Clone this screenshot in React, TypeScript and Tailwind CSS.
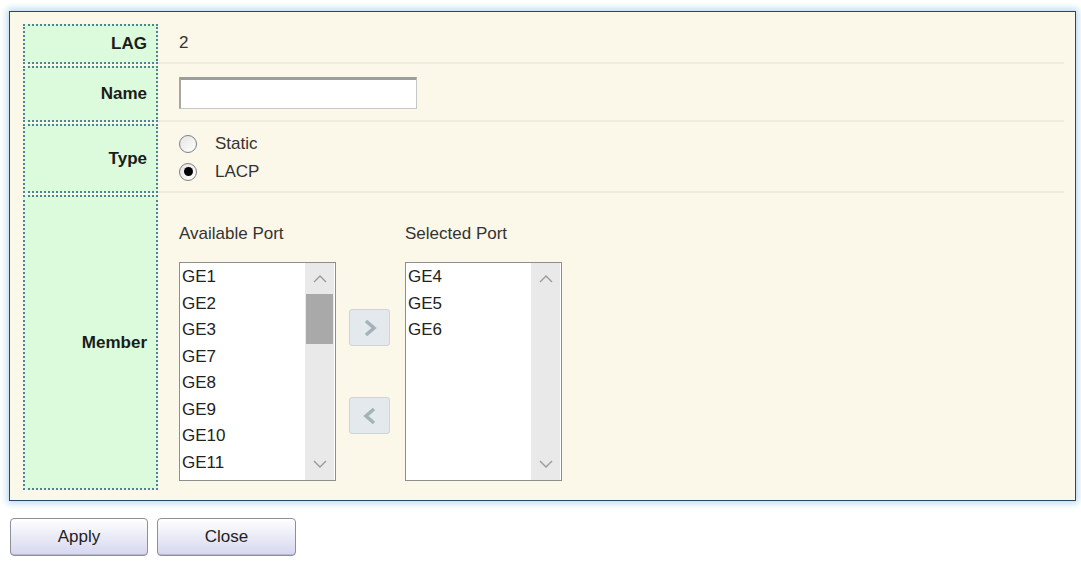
const availablePorts = ['GE1', 'GE2', 'GE3', 'GE7', 'GE8', 'GE9', 'GE10', 'GE11'];
const selectedPorts = ['GE4', 'GE5', 'GE6'];

const Label = ({ text }: { text: string }) => (
  <div className="flex items-center justify-end pr-[9px] bg-[#dcfbdc] border-2 border-dotted border-[#4f8396] text-[17px] font-bold text-[#1b1b1b]">
    {text}
  </div>
);

const Chevron = ({ up }: { up: boolean }) => (
  <svg width="14" height="9" viewBox="0 0 14 9" className="block">
    <path
      d={up ? 'M1 8 L7 2 L13 8' : 'M1 1 L7 7 L13 1'}
      fill="none"
      stroke="#9a9a9a"
      strokeWidth="1.4"
    />
  </svg>
);

const ListBox = ({ items, thumb }: { items: string[]; thumb: boolean }) => (
  <div className="flex w-[157px] h-[219px] border border-[#8e8e8e] bg-white">
    <div className="flex-1 pt-[1px] pl-[2px] text-[17px] leading-[26.5px] text-[#222]">
      {items.map((p) => (
        <div key={p}>{p}</div>
      ))}
    </div>
    <div className="flex flex-col w-[29px] bg-[#e9e9e9] mr-[1px]">
      <div className="h-[31px] flex items-center justify-center">
        <Chevron up />
      </div>
      <div className="flex-1">
        {thumb && <div className="h-[50px] mx-[1px] bg-[#a9a9a9]" />}
      </div>
      <div className="h-[31px] flex items-center justify-center">
        <Chevron up={false} />
      </div>
    </div>
  </div>
);

const MoveButton = ({ dir }: { dir: 'right' | 'left' }) => (
  <div className="w-[41px] h-[37px] flex items-center justify-center rounded-[3px] border border-[#cdd3d6] bg-[#e3e9ec]">
    <svg width="14" height="18" viewBox="0 0 14 18">
      <path
        d={dir === 'right' ? 'M3 2 L11 9 L3 16' : 'M11 2 L3 9 L11 16'}
        fill="none"
        stroke="#a3b3b8"
        strokeWidth="3.5"
      />
    </svg>
  </div>
);

const Radio = ({ checked }: { checked: boolean }) => (
  <div className="w-[18px] h-[18px] rounded-full border border-[#7f7f7f] bg-gradient-to-br from-[#e4e4e4] to-white flex items-center justify-center">
    {checked && <div className="w-[9px] h-[9px] rounded-full bg-black" />}
  </div>
);

export default function App() {
  return (
    <div className="w-[1081px] h-[565px] bg-white overflow-hidden font-['Liberation_Sans',Arial,sans-serif]">
      <div className="ml-[9px] mt-[11px] w-[1067px] h-[490px] border border-[#26496a] shadow-[0_0_7px_2px_#b6d6ef] bg-[#fbf7e9] pt-[12px] pl-[13px] pr-[11px] pb-[10px]">
        <div className="grid grid-cols-[135px_1fr] grid-rows-[40px_56px_69px_1fr] gap-y-[2px] h-full">
          <Label text="LAG" />
          <div className="flex items-center pl-[21px] text-[17px] text-[#333] border-b-2 border-[#efebdf]">
            2
          </div>

          <Label text="Name" />
          <div className="flex items-center pl-[21px] border-b-2 border-[#efebdf]">
            <div className="w-[238px] h-[32px] bg-white border border-[#c6c6c6] border-t-[3px] border-t-[#9d9d9d] border-l-2 border-l-[#a7a7a7]" />
          </div>

          <Label text="Type" />
          <div className="flex flex-col justify-center pl-[21px] text-[17px] text-[#333] border-b-2 border-[#efebdf]">
            <div className="flex items-center gap-[18px] h-[28px]">
              <Radio checked={false} />
              <span>Static</span>
            </div>
            <div className="flex items-center gap-[18px] h-[28px]">
              <Radio checked />
              <span>LACP</span>
            </div>
          </div>

          <Label text="Member" />
          <div className="flex items-end pl-[21px] pb-[9px] text-[17px] text-[#333]">
            <div className="flex flex-col">
              <div className="mb-[16px]">Available Port</div>
              <ListBox items={availablePorts} thumb />
            </div>
            <div className="flex flex-col gap-[51px] mx-[13px] mb-[47px]">
              <MoveButton dir="right" />
              <MoveButton dir="left" />
            </div>
            <div className="flex flex-col ml-[2px]">
              <div className="mb-[16px]">Selected Port</div>
              <ListBox items={selectedPorts} thumb={false} />
            </div>
          </div>
        </div>
      </div>

      <div className="flex gap-[9px] ml-[10px] mt-[17px]">
        <button className="w-[138px] h-[38px] rounded-[4px] border border-[#8f8f9a] bg-gradient-to-b from-white to-[#d6d6ef] text-[17px] text-[#222] shadow-[inset_0_-1px_0_#b8b8d0]">
          Apply
        </button>
        <button className="w-[139px] h-[38px] rounded-[4px] border border-[#8f8f9a] bg-gradient-to-b from-white to-[#d6d6ef] text-[17px] text-[#222] shadow-[inset_0_-1px_0_#b8b8d0]">
          Close
        </button>
      </div>
    </div>
  );
}
